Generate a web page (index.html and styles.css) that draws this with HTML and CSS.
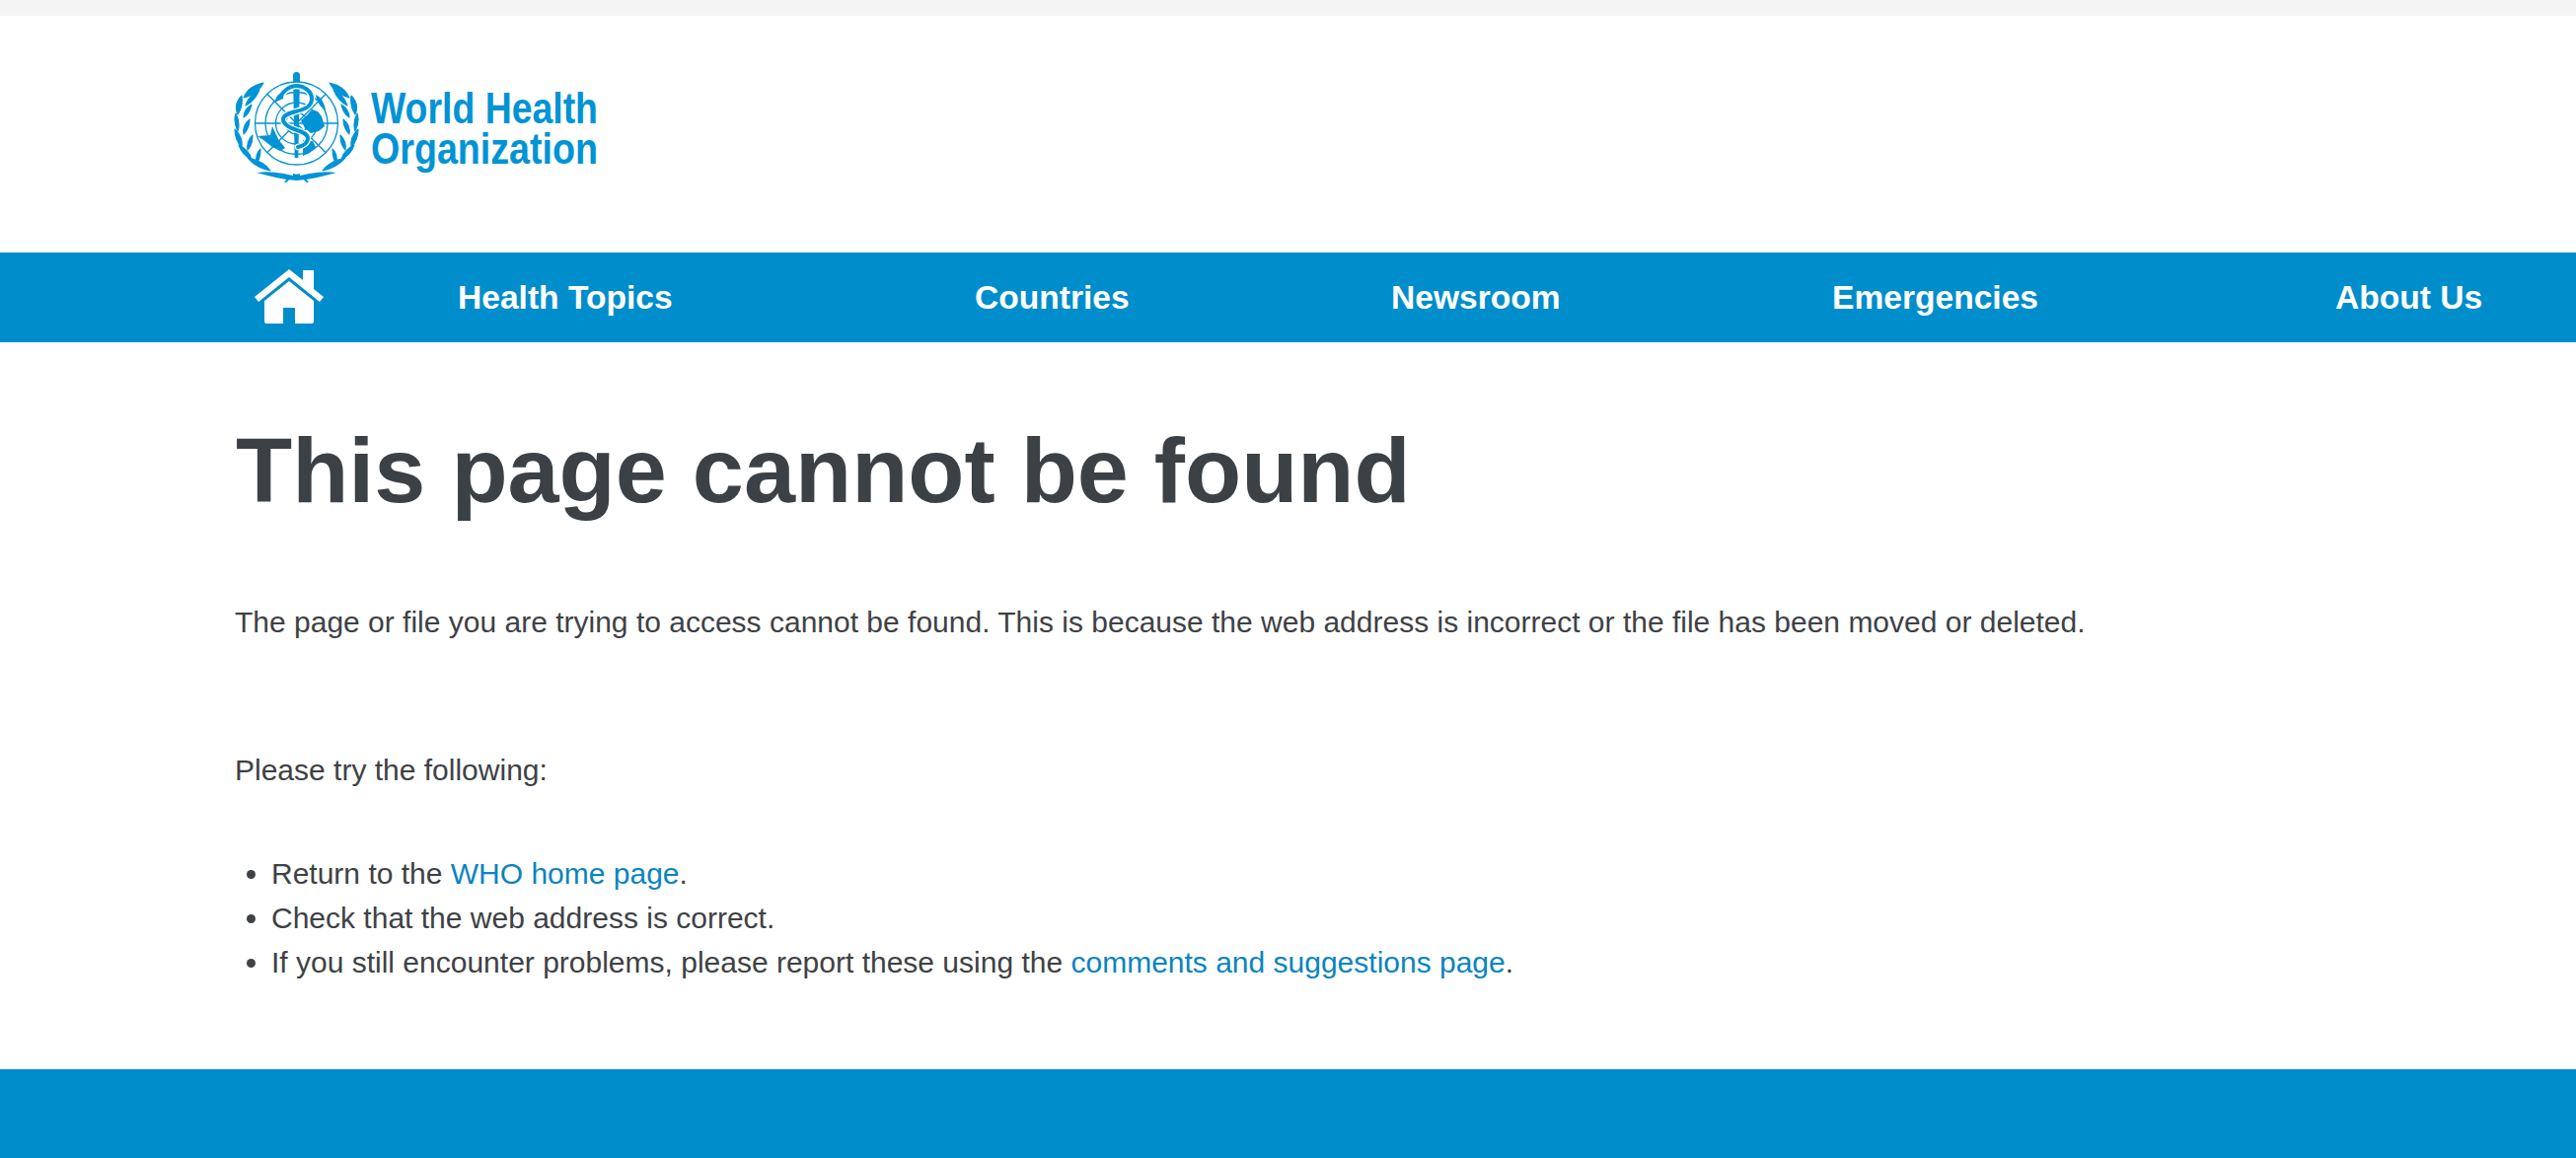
FILE: index.html
```html
<!DOCTYPE html>
<html lang="en">
<head>
<meta charset="utf-8">
<title>This page cannot be found</title>
<link rel="stylesheet" href="styles.css">
</head>
<body>
<div class="topband"></div>
<header class="masthead">
  <a class="brand" href="#">
    <svg class="emblem" width="127" height="112" viewBox="0 0 127 112" aria-hidden="true">
      <g fill="#0093d5">
        <g id="branch" class="laurel">
          <path d="M30 11C21 13 13 18 10 26C18 24 26 19 30 11Z"/>
          <path d="M26 18C19 22 14 27 12 34C18 31 23 25 26 18Z"/>
          <path d="M8 24C3 29 1 36 4 43C8 37 9 31 8 24Z"/>
          <path d="M18 33C13 36 10 40 10 46C15 43 17 38 18 33Z"/>
          <path d="M2 42C0 48 1 54 4 60C6 54 5 48 2 42Z"/>
          <path d="M16 48C11 52 9 57 10 63C14 59 16 54 16 48Z"/>
          <path d="M1 58C1 64 3 71 8 76C9 70 6 63 1 58Z"/>
          <path d="M19 64C15 68 13 73 14 79C18 75 19 70 19 64Z"/>
          <path d="M5 74C7 80 11 85 18 89C17 83 12 77 5 74Z"/>
          <path d="M27 78C23 82 22 87 23 93C26 89 27 84 27 78Z"/>
          <path d="M14 87C19 93 27 98 37 100C33 94 24 89 14 87Z"/>
        </g>
        <use href="#branch" transform="matrix(-1 0 0 1 127 0)"/>
        <path d="M23 102C38 100 52 103 63.500 106C75 103 89 100 104 102C90 106 76 109 63.500 110C51 109 37 106 23 102Z"/>
      </g>
      <g fill="none" stroke="#0093d5" stroke-width="1.300">
        <circle cx="63.500" cy="52" r="42"/>
        <circle cx="63.500" cy="52" r="31.500"/>
        <circle cx="63.500" cy="52" r="21"/>
        <circle cx="63.500" cy="52" r="11"/>
        <path d="M21 52H106M33.800 22.300L93.200 81.700M93.200 22.300L33.800 81.700"/>
        <path d="M52 112C55 107 60 105 67 104M75 112C72 107 67 105 60 104" stroke-width="2"/>
      </g>
      <g fill="#0093d5">
        <path d="M24 65L37 64L39 55L45 68L52 77L47 80L39 76L30 69Z"/>
        <path d="M68 49L74 44L79 38L85 40L89 45L92 55L86 60L78 62L72 57Z"/>
        <path d="M70 69L80 70L83 76L77 82L70 85Z"/>
        <path d="M83 23C88 25 92 31 93 39C88 36 84 30 83 23Z"/>
      </g>
      <path d="M60 3.500A3.500 3.500 0 0 1 67 3.500L65.300 87H61.700Z" fill="#0093d5"/>
      <path class="serpent-halo" d="M46 26C50 20 55 14 63 14C72 14 79 20 79 27C79 36 70 38 63 40C55 42 50 44 50 48C50 54 58 57 64 59C70 61 75 63 75 67C75 72 70 75 65 76"/>
      <path class="serpent" d="M46 26C50 20 55 14 63 14C72 14 79 20 79 27C79 36 70 38 63 40C55 42 50 44 50 48C50 54 58 57 64 59C70 61 75 63 75 67C75 72 70 75 65 76"/>
      <path d="M41 31L44 24L51 19L50 27Z" fill="#0093d5"/>
    </svg>
    <span class="wordmark"><span class="line-a">World Health</span><span class="line-b">Organization</span></span>
  </a>
</header>
<nav class="mainnav">
  <a class="homelink" href="#" aria-label="Home">
    <svg width="70" height="55" viewBox="0 0 70 55"><path fill="#fff" d="M35 0L49 11V1H60V20L70 28L66 33L35 8L4 33L0 28Z"/><path fill="#fff" d="M35 12L10 32V53Q10 55 12 55H29V39H41V55H58Q60 55 60 53V32Z"/></svg>
  </a>
  <a href="#">Health Topics</a>
  <a href="#">Countries</a>
  <a href="#">Newsroom</a>
  <a href="#">Emergencies</a>
  <a href="#">About Us</a>
</nav>
<main class="content">
  <h1>This page cannot be found</h1>
  <p class="lead">The page or file you are trying to access cannot be found. This is because the web address is incorrect or the file has been moved or deleted.</p>
  <p class="try">Please try the following:</p>
  <ul>
    <li>Return to the <a href="#">WHO home page</a>.</li>
    <li>Check that the web address is correct.</li>
    <li>If you still encounter problems, please report these using the <a href="#">comments and suggestions page</a>.</li>
  </ul>
</main>
<footer class="foot"></footer>
</body>
</html>
```
FILE: styles.css
```css
* { box-sizing: border-box; }
html, body { margin: 0; padding: 0; }
body {
  height: 1174px;
  overflow: hidden;
  background: #fff;
  color: #3e4145;
  font-family: "Liberation Sans", Arial, sans-serif;
  font-size: 30px;
  display: flex;
  flex-direction: column;
}
.topband { height: 16px; background: #f4f4f4; }
.masthead { height: 240px; padding: 57px 0 0 237px; }
.brand { display: flex; align-items: flex-start; text-decoration: none; }
.emblem { display: block; flex: none; }
.laurel { stroke: #0093d5; stroke-width: 1.1px; stroke-linejoin: round; }
.serpent, .serpent-halo { fill: none; stroke-linecap: round; }
.serpent-halo { stroke: #fff; stroke-width: 6.5px; }
.serpent { stroke: #0093d5; stroke-width: 4px; }
.wordmark {
  display: flex;
  flex-direction: column;
  margin: 16px 0 0 11.5px;
  color: #0093d5;
  font-weight: 700;
  font-size: 44px;
  line-height: 41px;
  white-space: nowrap;
}
.line-a { transform: scaleX(0.85); transform-origin: left center; }
.line-b { transform: scaleX(0.855); transform-origin: left center; }
.mainnav {
  height: 91px;
  background: #008dcb;
  padding-left: 258px;
  display: grid;
  grid-template-columns: 206px 524px 422px 447px 510px auto;
  align-items: center;
}
.mainnav a { color: #fff; font-weight: 700; font-size: 33.6px; text-decoration: none; }
.homelink { display: block; height: 55px; margin-top: -2px; }
.homelink svg { display: block; }
.content { flex: 1; padding: 0 0 0 238px; }
h1 {
  margin: 75px 0 0 1px;
  color: #3c4146;
  font-size: 93.6px;
  line-height: 110px;
  font-weight: 700;
}
.lead { margin: 76px 0 0; line-height: 45px; }
.try { margin: 105px 0 0; line-height: 45px; }
ul { margin: 60px 0 0; padding: 0 0 0 37px; }
li { line-height: 45px; }
li a { color: #0a84c0; text-decoration: none; }
.foot { height: 90px; background: #008dcb; }
```
